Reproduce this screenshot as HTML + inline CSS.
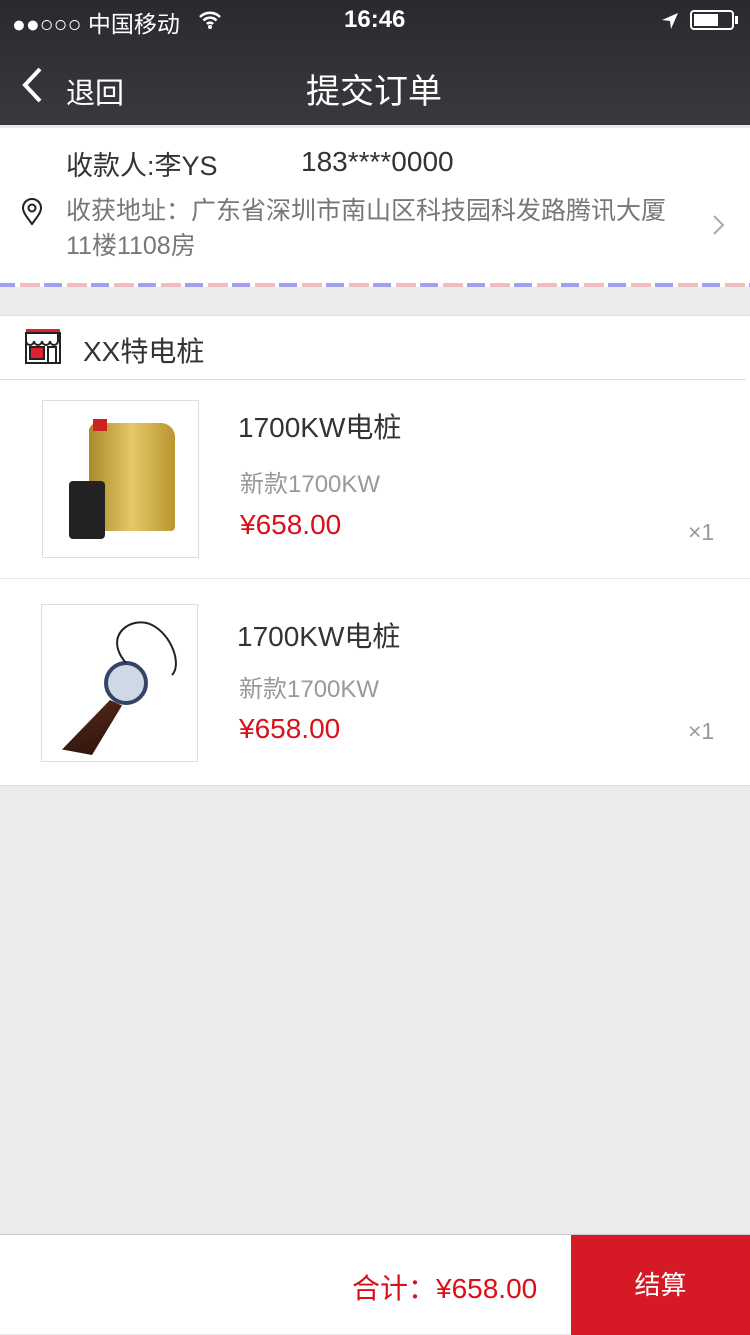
<!DOCTYPE html>
<html><head><meta charset="utf-8"><style>
*{margin:0;padding:0;box-sizing:border-box}
body{width:750px;height:1334px;background:#ebebeb;font-family:"Liberation Sans","Noto Sans CJK SC",sans-serif;position:relative;overflow:hidden}
.hdr{position:absolute;left:0;top:0;width:750px;height:125px;background:linear-gradient(#2a2a2e,#3a3a3e)}
.abs{position:absolute}
.white{position:absolute;left:0;background:#fff}
</style></head><body>
<div class="hdr">
 <div class="abs" style="left:12px;top:5px;color:#fff;font-size:23px">●●○○○ 中国移动</div>
 <svg class="abs" style="left:198px;top:10px" width="24" height="20" viewBox="0 0 24 20"><path d="M2 7a14 14 0 0 1 20 0M5.5 10.5a9 9 0 0 1 13 0M9 14a4 4 0 0 1 6 0" stroke="#fff" stroke-width="2.6" fill="none"/><circle cx="12" cy="17" r="2" fill="#fff"/></svg>
 <div class="abs" style="left:344px;top:6px;color:#fff;font-size:24px;font-weight:bold">16:46</div>
 <svg class="abs" style="left:660px;top:11px" width="20" height="20" viewBox="0 0 20 20"><path d="M18 2L2 9l8 1 1 8z" fill="#fff"/></svg>
 <div class="abs" style="left:690px;top:10px;width:44px;height:20px;border:2px solid #fff;border-radius:4px"><div style="position:absolute;left:2px;top:2px;width:24px;height:12px;background:#fff"></div></div>
 <div class="abs" style="left:735px;top:16px;width:3px;height:8px;background:#fff"></div>
 <svg class="abs" style="left:20px;top:66px" width="24" height="38" viewBox="0 0 24 38"><path d="M20 3L5 19l15 16" stroke="#fff" stroke-width="4" fill="none"/></svg>
 <div class="abs" style="left:66px;top:70px;color:#fff;font-size:29px">退回</div>
 <div class="abs" style="left:306px;top:64px;color:#fff;font-size:34px">提交订单</div>
</div>
<div class="white" style="top:128px;width:750px;height:155px">
 <div class="abs" style="left:66px;top:16px;font-size:27px;color:#333">收款人:李YS</div>
 <div class="abs" style="left:301px;top:18px;font-size:28px;color:#333">183****0000</div>
 <svg class="abs" style="left:20px;top:70px" width="24" height="28" viewBox="0 0 24 28"><path d="M12 26C6 18 3 14 3 10a9 9 0 0 1 18 0c0 4-3 8-9 16z" stroke="#222" stroke-width="2" fill="none"/><circle cx="12" cy="10" r="3.5" stroke="#222" stroke-width="2" fill="none"/></svg>
 <div class="abs" style="left:66px;top:66px;width:620px;font-size:25px;line-height:35px;color:#777">收获地址：广东省深圳市南山区科技园科发路腾讯大厦<br>11楼1108房</div>
 <svg class="abs" style="left:712px;top:86px" width="14" height="22" viewBox="0 0 14 22"><path d="M2 2l9 9-9 9" stroke="#aaa" stroke-width="2" fill="none"/></svg>
</div>
<div class="abs" style="left:0;top:283px;width:750px;height:4px;background:repeating-linear-gradient(90deg,#a29ef0 0 15px,#fff 15px 20px,#f0bcc0 20px 40px,#fff 40px 44px,#a29ef0 44px 47px)"></div>
<div class="white" style="top:315px;width:750px;height:471px;border-top:1px solid #ddd;border-bottom:1px solid #ddd">
 <svg class="abs" style="left:25px;top:12px" width="36" height="36" viewBox="0 0 36 36"><rect x="1" y="1" width="34" height="4" fill="#d9232e"/><rect x="1" y="5" width="34" height="30" fill="none" stroke="#222" stroke-width="2"/><path d="M1 5v8a4 4 0 0 0 8 0 4 4 0 0 0 8 0 4 4 0 0 0 8 0 4 4 0 0 0 8 0V5" fill="none" stroke="#222" stroke-width="2"/><rect x="5" y="19" width="14" height="12" fill="#d9232e" stroke="#222" stroke-width="2"/><rect x="23" y="19" width="8" height="16" fill="none" stroke="#222" stroke-width="2"/></svg>
 <div class="abs" style="left:83px;top:14px;font-size:28px;color:#333">XX特电桩</div>
 <div class="abs" style="left:0;top:63px;width:746px;height:1px;background:#ddd"></div>
 <div class="abs" style="left:42px;top:84px;width:157px;height:158px;border:1px solid #ddd">
  <div class="abs" style="left:46px;top:22px;width:86px;height:108px;background:linear-gradient(90deg,#a88a2a,#e6c86a,#b8962e);border-radius:8px 14px 4px 4px"></div>
  <div class="abs" style="left:50px;top:18px;width:14px;height:12px;background:#c22"></div>
  <div class="abs" style="left:26px;top:80px;width:36px;height:58px;background:#222;border-radius:4px"></div>
 </div>
 <div class="abs" style="left:238px;top:90px;font-size:28px;color:#333">1700KW电桩</div>
 <div class="abs" style="left:240px;top:148px;font-size:24px;color:#999">新款1700KW</div>
 <div class="abs" style="left:240px;top:193px;font-size:28px;color:#d9101a">¥658.00</div>
 <div class="abs" style="left:688px;top:203px;font-size:23px;color:#999">×1</div>
 <div class="abs" style="left:0;top:262px;width:750px;height:1px;background:#e6e6e6"></div>
 <div class="abs" style="left:41px;top:288px;width:157px;height:158px;border:1px solid #ddd">
  <div class="abs" style="left:62px;top:56px;width:44px;height:44px;border-radius:50%;background:#cfd8e6;border:4px solid #346"></div>
  <div class="abs" style="left:20px;top:95px;width:60px;height:55px;background:linear-gradient(160deg,#5a2a1a,#2a120a);clip-path:polygon(80% 0,100% 10%,50% 100%,0 90%)"></div>
  <svg class="abs" style="left:0;top:0" width="157" height="158"><path d="M84 58C60 30 90 10 110 20s30 40 20 50" stroke="#222" stroke-width="2" fill="none"/></svg>
 </div>
 <div class="abs" style="left:237px;top:299px;font-size:28px;color:#333">1700KW电桩</div>
 <div class="abs" style="left:239px;top:353px;font-size:24px;color:#999">新款1700KW</div>
 <div class="abs" style="left:239px;top:397px;font-size:28px;color:#d9101a">¥658.00</div>
 <div class="abs" style="left:688px;top:402px;font-size:23px;color:#999">×1</div>
</div>
<div class="white" style="top:1234px;width:750px;height:100px;border-top:1px solid #ccc">
 <div class="abs" style="left:352px;top:32px;font-size:28px;color:#d9101a">合计：¥658.00</div>
 <div class="abs" style="left:571px;top:0;width:179px;height:100px;background:#d61a25;color:#fff;font-size:26px;text-align:center;line-height:100px">结算</div>
</div>
</body></html>
